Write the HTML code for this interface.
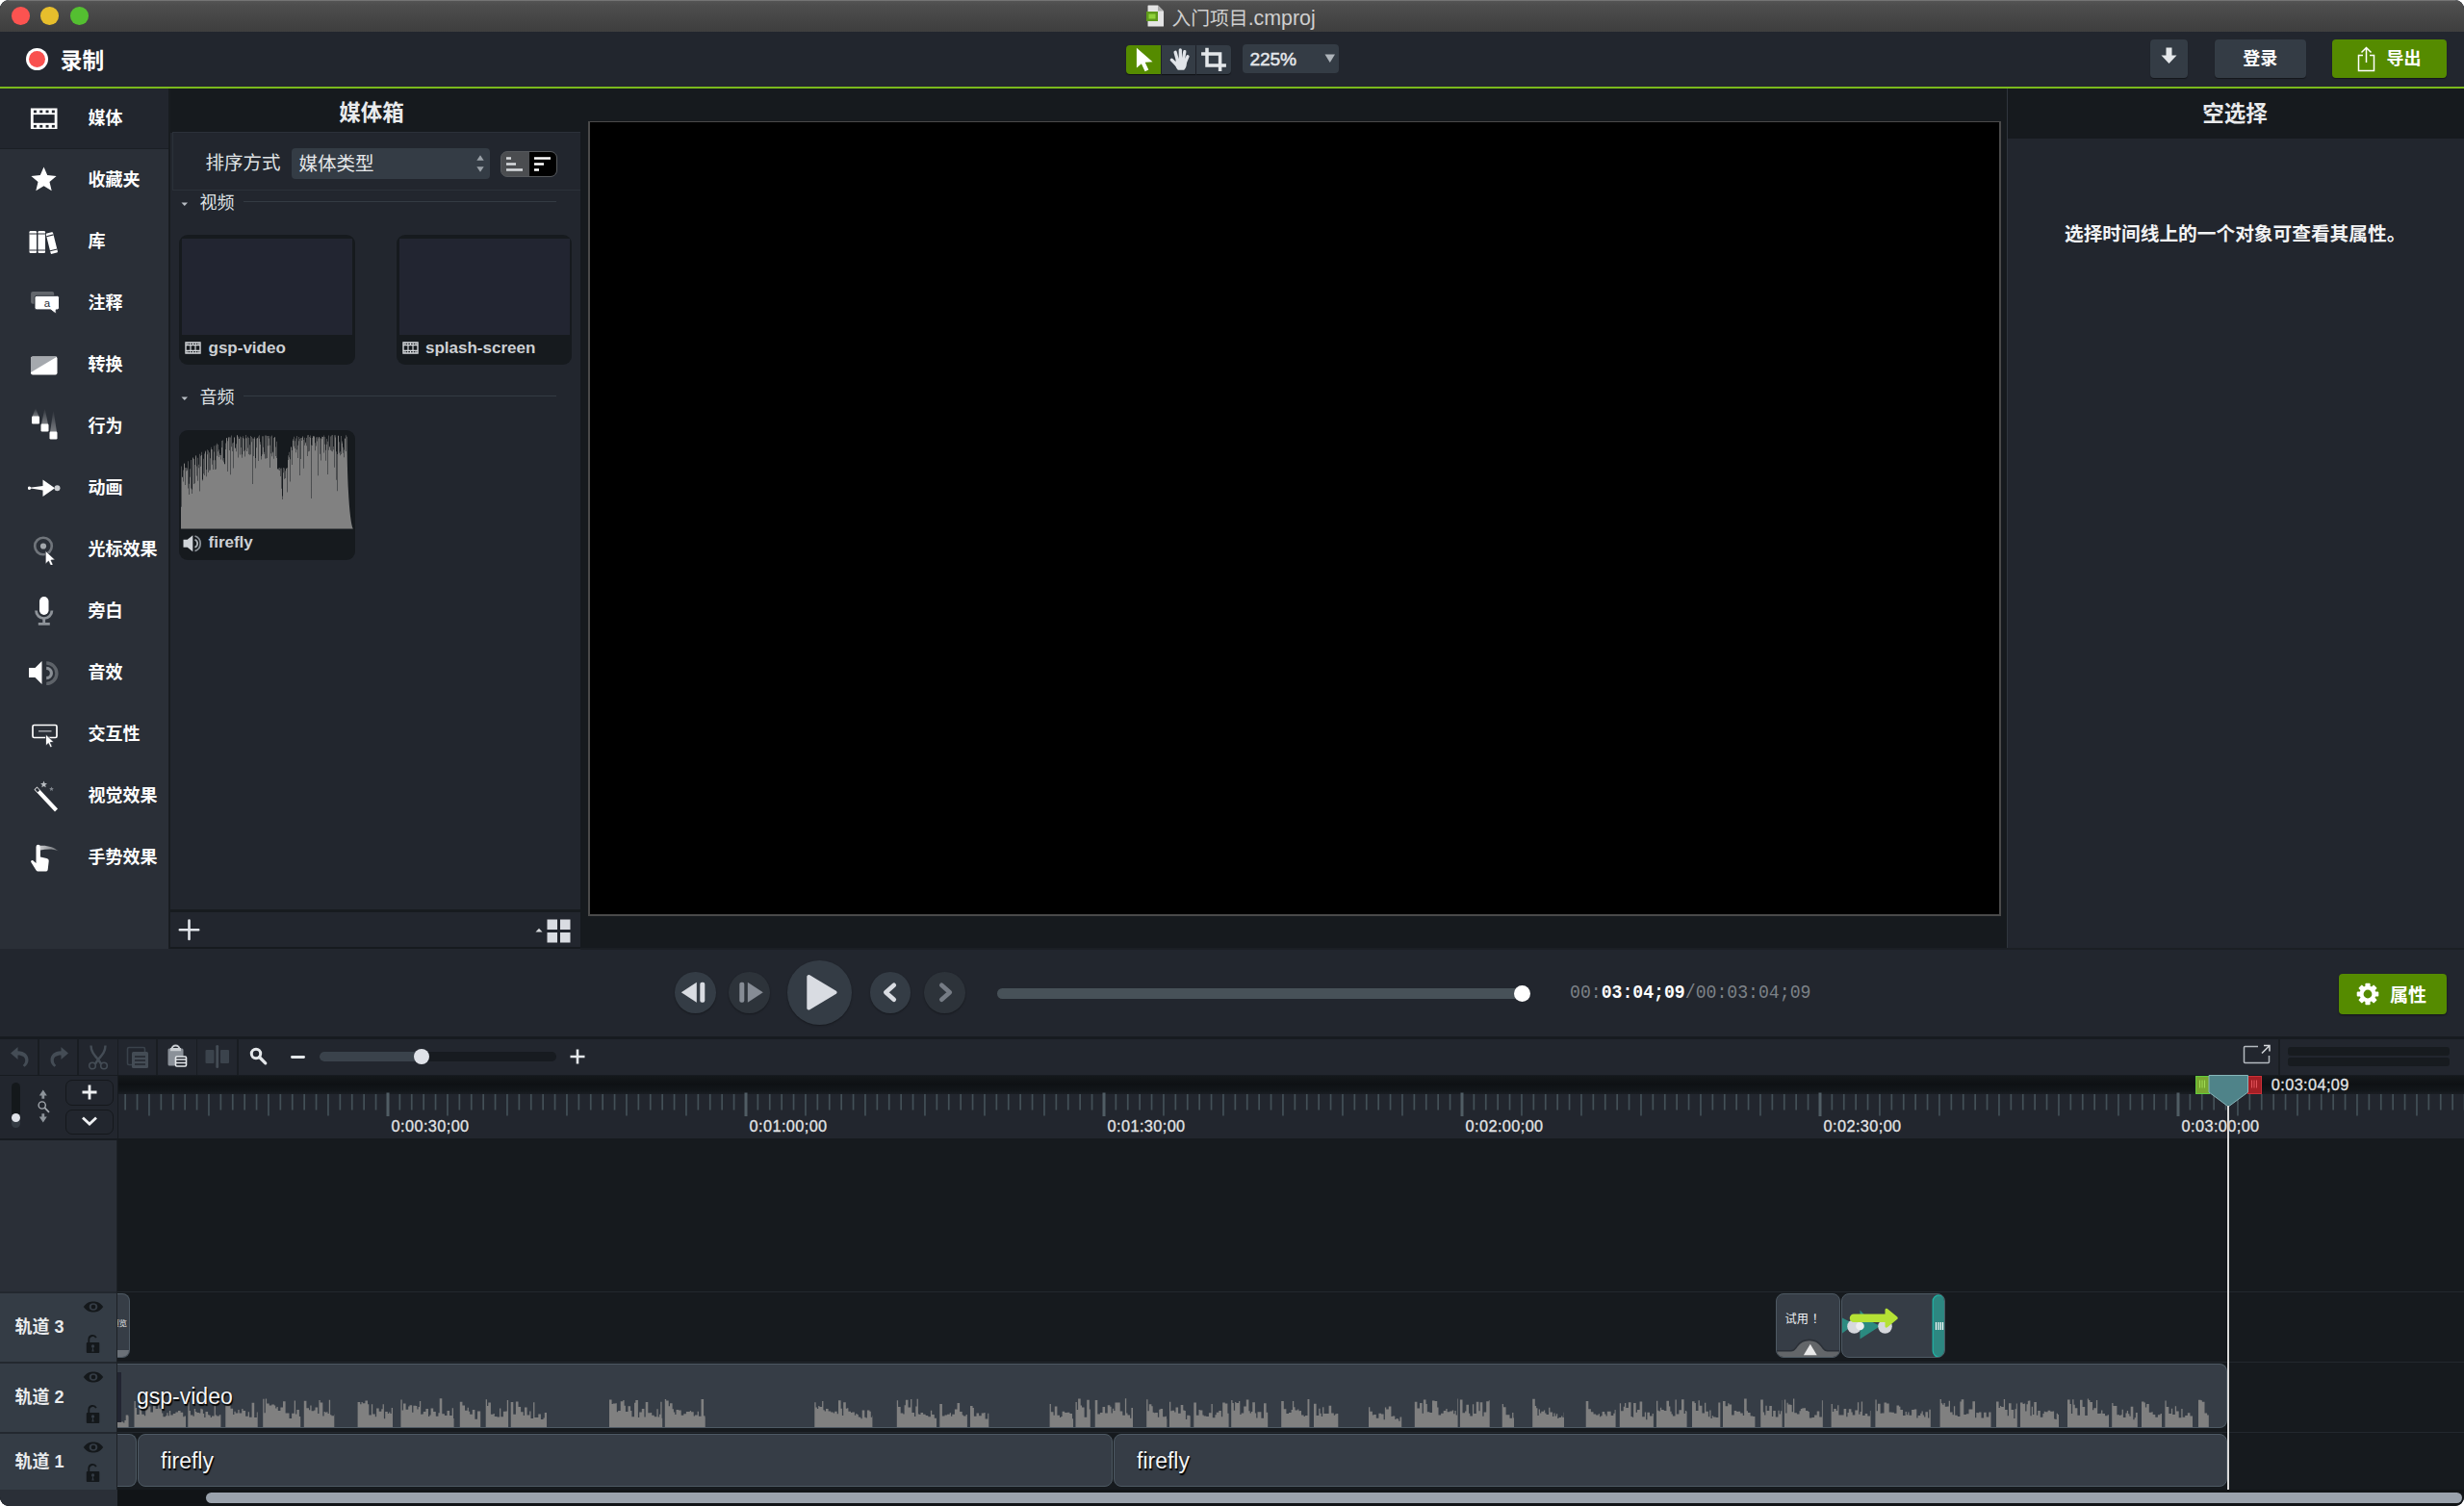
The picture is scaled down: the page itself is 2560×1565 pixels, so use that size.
<!DOCTYPE html><html lang="zh-CN"><head><meta charset="utf-8"><title>入门项目.cmproj</title><style>
html{margin:0;padding:0;background:#fff;}body{margin:0;padding:0;border-radius:9px;}
body{width:2560px;height:1565px;background:#22262e;position:relative;overflow:hidden;
font-family:"Liberation Sans","Noto Sans CJK SC",sans-serif;-webkit-font-smoothing:antialiased;}
div,svg{position:absolute;box-sizing:border-box;}
.mono{font-family:"Liberation Mono",monospace;}
</style></head><body><div id="win" style="left:0;top:0;width:2560px;height:1565px;border-radius:9px;overflow:hidden;background:#22262e;"><div style="left:0px;top:0px;width:2560px;height:33.8px;background:linear-gradient(#545454,#4d4d4d 15%,#3e3e3e);border-bottom:1px solid #15171a;border-top:1px solid #747474;"></div><div style="left:11.950000000000001px;top:7.35px;width:18.7px;height:18.7px;border-radius:50%;background:#fc5350;"></div><div style="left:42.449999999999996px;top:7.35px;width:18.7px;height:18.7px;border-radius:50%;background:#e7be2c;"></div><div style="left:72.95px;top:7.35px;width:18.7px;height:18.7px;border-radius:50%;background:#54bf31;"></div><svg style="left:1191px;top:5px" width="19" height="23" viewBox="0 0 19 23"><path d="M2 0.5h10l6 6v15.5a.5.5 0 0 1-.5.5h-15.5a.5.5 0 0 1-.5-.5v-21a.5.5 0 0 1 .5-.5z" fill="#e4e4e4"/><path d="M12 .5l6 6h-6z" fill="#a9a9a9"/><rect x="0" y="7" width="12" height="10" fill="#5e9a1b"/><rect x="2.5" y="9.5" width="7" height="5" fill="#8fd13a"/></svg><div style="left:1217.5px;top:4.5px;font-size:19.8px;line-height:28px;color:#cfcfcf;font-weight:400;white-space:nowrap;">入门项目<span style="font-size:21.400px">.cmproj</span></div><div style="left:0px;top:33px;width:2560px;height:57px;background:#22262e;"></div><div style="left:0px;top:90.1px;width:2560px;height:1.7px;background:#7ab81c;"></div><div style="left:27px;top:50px;width:23px;height:23px;border-radius:50%;background:#fff;"></div><div style="left:30px;top:53px;width:17px;height:17px;border-radius:50%;background:#f9514f;"></div><div style="left:62.8px;top:46.7px;font-size:22.7px;line-height:32px;color:#fff;font-weight:700;white-space:nowrap;">录制</div><div style="left:1170px;top:46.5px;width:35.5px;height:30.5px;background:#558b00;border-radius:4px 0 0 4px;box-shadow:0 1px 1px rgba(0,0,0,.5);"></div><div style="left:1206.5px;top:46.5px;width:35.5px;height:30.5px;background:#343c45;box-shadow:0 1px 1px rgba(0,0,0,.5);"></div><div style="left:1243px;top:46.5px;width:35.5px;height:30.5px;background:#343c45;border-radius:0 4px 4px 0;box-shadow:0 1px 1px rgba(0,0,0,.5);"></div><svg style="left:1178px;top:49px" width="22" height="26" viewBox="0 0 22 26"><path d="M2.900.700V21.600L7.900 17.300l3.700 8 3.700-1.700-3.600-7.800 7.800-.500z" fill="#fff"/></svg><svg style="left:1214px;top:50px" width="24" height="24" viewBox="0 0 24 24"><g stroke="#e1e4e9" stroke-width="3.300" stroke-linecap="round" fill="none"><path d="M9.600 13.500L7.100 4.300M12.400 12.500L12.300 2M15.200 13L16.800 3.700M17.300 15L20 8.700M9 18L3.300 12.200"/></g><path d="M7.800 12.500h10.700c1 4.500 0 7.800-2.300 10.300H9.800C7 20 6.500 16 7.800 12.500z" fill="#e1e4e9"/></svg><svg style="left:1247px;top:48px" width="28" height="28" viewBox="0 0 28 28"><path d="M7 1.700V19.900H26.900M1.100 8H20.600V26" fill="none" stroke="#e4e7ea" stroke-width="3.500"/></svg><div style="left:1291px;top:45.5px;width:100px;height:30.5px;background:#343c45;border-radius:4px;"></div><div style="left:1298.5px;top:48.0px;font-size:19.2px;line-height:27px;color:#e4e7ea;font-weight:400;white-space:nowrap;-webkit-text-stroke:.5px #e4e7ea;letter-spacing:-.2px;">225%</div><svg style="left:1376px;top:56px" width="12" height="10" viewBox="0 0 12 10"><path d="M0.5 0.5h10.5L5.75 9z" fill="#aeb4ba"/></svg><div style="left:2234px;top:41px;width:39px;height:39.5px;background:#343c45;border-radius:4px;box-shadow:0 1px 1px rgba(0,0,0,.4);"></div><svg style="left:2245px;top:49px" width="17" height="18" viewBox="0 0 17 18"><path d="M5.5 0.5h6v8h5L8.5 17 .5 8.500h5z" fill="#e4e7ea"/></svg><div style="left:2301px;top:41px;width:94.5px;height:39.5px;background:#343c45;border-radius:4px;box-shadow:0 1px 1px rgba(0,0,0,.4);"></div><div style="left:2301px;top:49.2px;font-size:18px;line-height:25px;color:#fff;font-weight:700;white-space:nowrap;width:94.5px;text-align:center;">登录</div><div style="left:2422.5px;top:41px;width:119px;height:39.5px;background:#558b00;border-radius:4px;box-shadow:0 1px 1px rgba(0,0,0,.4);"></div><svg style="left:2448px;top:47px" width="22" height="28" viewBox="0 0 22 28"><path d="M7 10.500H2.500V26.500H18.500V10.500H14" fill="none" stroke="#fff" stroke-width="1.500"/><path d="M10.500 18V3M5.500 7.500L10.500 2.500 15.500 7.500" fill="none" stroke="#fff" stroke-width="1.500"/></svg><div style="left:2479.5px;top:49.2px;font-size:18px;line-height:25px;color:#fff;font-weight:700;white-space:nowrap;">导出</div><div style="left:0px;top:92px;width:175.2px;height:894px;background:#2a2f37;"></div><div style="left:0px;top:92px;width:177px;height:63.2px;background:#22262e;border-bottom:1.500px solid #1b1f25;"></div><div style="left:175.2px;top:92px;width:1.8px;height:894px;background:#181c20;"></div><svg style="left:29px;top:105px" width="34" height="34" viewBox="0 0 34 34"><path d="M2.900 7.600h27.600v21.400H2.900z" fill="#fff"/><rect x="5.700" y="14.100" width="22" height="8.700" fill="#22262e"/><rect x="5.95" y="9.600" width="3" height="2.700" fill="#22262e"/><rect x="5.95" y="24.900" width="3" height="2.700" fill="#22262e"/><rect x="12.25" y="9.600" width="3" height="2.700" fill="#22262e"/><rect x="12.25" y="24.900" width="3" height="2.700" fill="#22262e"/><rect x="18.55" y="9.600" width="3" height="2.700" fill="#22262e"/><rect x="18.55" y="24.900" width="3" height="2.700" fill="#22262e"/><rect x="24.85" y="9.600" width="3" height="2.700" fill="#22262e"/><rect x="24.85" y="24.900" width="3" height="2.700" fill="#22262e"/></svg><div style="left:91.5px;top:110.7px;font-size:18px;line-height:25px;color:#fff;font-weight:700;white-space:nowrap;">媒体</div><svg style="left:29px;top:170.3px" width="34" height="34" viewBox="0 0 34 34"><path d="M16.500 3.500l3.700 8.600 9.400.8-7.100 6.100 2.200 9.200-8.200-4.900-8.200 4.900 2.200-9.200-7.100-6.100 9.400-.8z" fill="#fff"/></svg><div style="left:91.5px;top:174.7px;font-size:18px;line-height:25px;color:#fff;font-weight:700;white-space:nowrap;">收藏夹</div><svg style="left:29px;top:232.4px" width="34" height="34" viewBox="0 0 34 34"><rect x="1.500" y="8" width="7.500" height="23" rx="1.200" fill="#fff"/><rect x="10.500" y="8" width="7.500" height="23" rx="1.200" fill="#fff"/><g transform="rotate(-14 25 20)"><rect x="21" y="9.500" width="7.500" height="22" rx="1.200" fill="#fff"/><path d="M21 12.500h7.500M21 28h7.500" stroke="#2a2f37" stroke-width="1.100"/></g><path d="M1.500 11h16.500M1.500 28h16.500" stroke="#2a2f37" stroke-width="1.100"/></svg><div style="left:91.5px;top:238.7px;font-size:18px;line-height:25px;color:#fff;font-weight:700;white-space:nowrap;">库</div><svg style="left:29px;top:297px" width="34" height="34" viewBox="0 0 34 34"><rect x="3.100" y="6.100" width="24.100" height="12.600" rx="2" fill="#63676c"/><path d="M9 10.300h21.500a2 2 0 0 1 2 2v10.600a2 2 0 0 1-2 2h-1.300v4.300l-5.700-4.300H9a2 2 0 0 1-2-2V12.300a2 2 0 0 1 2-2z" fill="#fff" stroke="#2a2f37" stroke-width="1"/><text x="19.900" y="21.600" font-size="11.500" font-weight="400" text-anchor="middle" fill="#2a2f37" style="font-family:Liberation Sans,sans-serif">a</text></svg><div style="left:91.5px;top:302.7px;font-size:18px;line-height:25px;color:#fff;font-weight:700;white-space:nowrap;">注释</div><svg style="left:29px;top:362.6px" width="34" height="34" viewBox="0 0 34 34"><rect x="3" y="7.500" width="27.500" height="19" rx="2" fill="#fff"/><path d="M3 9.500a2 2 0 0 1 2-2h25.500L3 24z" fill="#a5a9ae"/></svg><div style="left:91.5px;top:366.7px;font-size:18px;line-height:25px;color:#fff;font-weight:700;white-space:nowrap;">转换</div><svg style="left:29px;top:423.7px" width="34" height="34" viewBox="0 0 34 34"><defs><linearGradient id="bg1" x1="0" y1="0" x2="0" y2="1"><stop offset="0" stop-color="#fff" stop-opacity="0"/><stop offset="1" stop-color="#fff" stop-opacity=".38"/></linearGradient></defs><path d="M8 0l3.500 9h-7z" fill="url(#bg1)"/><path d="M17.500 0l3.500 17h-7z" fill="url(#bg1)"/><path d="M26.500 2l3.500 23h-7z" fill="url(#bg1)"/><rect x="4" y="8.500" width="8" height="8" rx="1.200" fill="#fff"/><rect x="13.500" y="16.500" width="8" height="8" rx="1.200" fill="#fff"/><rect x="22.500" y="24.500" width="8" height="8" rx="1.200" fill="#fff"/></svg><div style="left:91.5px;top:430.7px;font-size:18px;line-height:25px;color:#fff;font-weight:700;white-space:nowrap;">行为</div><svg style="left:29px;top:490.3px" width="34" height="34" viewBox="0 0 34 34"><path d="M0 17l15.500-2V8.500L28 17.300 15.500 26v-6.500z" fill="#fff"/><circle cx="1.500" cy="17.200" r="1.700" fill="#fff"/><circle cx="30.500" cy="17.200" r="3" fill="#c9ccd0"/></svg><div style="left:91.5px;top:494.7px;font-size:18px;line-height:25px;color:#fff;font-weight:700;white-space:nowrap;">动画</div><svg style="left:29px;top:553px" width="34" height="34" viewBox="0 0 34 34"><circle cx="16" cy="14.500" r="8.800" fill="none" stroke="#70757b" stroke-width="2.600"/><circle cx="16" cy="14.500" r="3.100" fill="#a3a7ac"/><path d="M18.300 19.500l0 13.500 3.200-2.900 2.200 4.800 2.400-1.100-2.200-4.700 4.300-.300z" fill="#fff" stroke="#2a2f37" stroke-width=".6"/></svg><div style="left:91.5px;top:558.7px;font-size:18px;line-height:25px;color:#fff;font-weight:700;white-space:nowrap;">光标效果</div><svg style="left:29px;top:617px" width="34" height="34" viewBox="0 0 34 34"><rect x="12" y="3" width="9.500" height="19" rx="4.750" fill="#fff"/><path d="M8.500 17.500a8.200 8.200 0 0 0 16.400 0" fill="none" stroke="#8e9399" stroke-width="2.800"/><path d="M16.700 26v5M10.800 31.300h12" stroke="#8e9399" stroke-width="2.800"/></svg><div style="left:91.5px;top:622.7px;font-size:18px;line-height:25px;color:#fff;font-weight:700;white-space:nowrap;">旁白</div><svg style="left:29px;top:682px" width="34" height="34" viewBox="0 0 34 34"><path d="M1 12h6.500L14.500 5v24l-7-7H1z" fill="#fff"/><path d="M19.200 12.300a5.200 5.200 0 0 1 0 10.400" fill="none" stroke="#8b9096" stroke-width="3.200"/><path d="M19.200 7a10.700 10.700 0 0 1 0 21.400" fill="none" stroke="#5e6369" stroke-width="3.400"/></svg><div style="left:91.5px;top:686.7px;font-size:18px;line-height:25px;color:#fff;font-weight:700;white-space:nowrap;">音效</div><svg style="left:29px;top:748px" width="34" height="34" viewBox="0 0 34 34"><rect x="5" y="5.500" width="25" height="13" rx="1.500" fill="none" stroke="#fff" stroke-width="1.700"/><path d="M11 11.800h13.500" stroke="#a9adb2" stroke-width="1.400"/><path d="M18.500 15l0 12 2.800-2.500 2 4.300 2-1-2-4.200 3.700-.300z" fill="#fff" stroke="#2a2f37" stroke-width=".8"/></svg><div style="left:91.5px;top:750.7px;font-size:18px;line-height:25px;color:#fff;font-weight:700;white-space:nowrap;">交互性</div><svg style="left:29px;top:809.5px" width="34" height="34" viewBox="0 0 34 34"><path d="M6.500 10.500l3-3L31 30.500l-3 3z" fill="#fff"/><path d="M7.500 10.500l2-2 2.600 2.800-2 2z" fill="#2a2f37"/><path d="M16.500 1.500l1 2.400 2.500.2-1.900 1.700.6 2.500-2.200-1.300-2.200 1.300.6-2.500-1.900-1.700 2.500-.2z" fill="#b7bbc0"/><path d="M24.500 7.500l.7 1.600 1.700.1-1.300 1.100.4 1.700-1.500-.9-1.500.9.400-1.700-1.300-1.100 1.700-.1z" fill="#7f858c"/></svg><div style="left:91.5px;top:814.7px;font-size:18px;line-height:25px;color:#fff;font-weight:700;white-space:nowrap;">视觉效果</div><svg style="left:29px;top:873.5px" width="34" height="34" viewBox="0 0 34 34"><defs><linearGradient id="gg1" x1="0" y1="0" x2="1" y2="0"><stop offset="0" stop-color="#fff" stop-opacity=".75"/><stop offset="1" stop-color="#fff" stop-opacity=".3"/></linearGradient></defs><path d="M12.500 4.800C20 4 27 6.500 31.700 10.200 26 8 19 8.300 12.900 9.600z" fill="url(#gg1)"/><path d="M8.500 6a2.200 2.200 0 0 1 4.400 0v10.500l6.600 1.400c1.600.4 2.400 1.400 2.200 3l-1 8.600c-.2 1.400-1 2-2.300 2H11c-1.200 0-2-.5-2.700-1.500L3.300 22c-.8-1.300.7-2.800 2-1.700l3.200 2.700z" fill="#fff"/></svg><div style="left:91.5px;top:878.7px;font-size:18px;line-height:25px;color:#fff;font-weight:700;white-space:nowrap;">手势效果</div><div style="left:177px;top:92px;width:426px;height:45.5px;background:#161a1e;"></div><div style="left:176px;top:102.2px;font-size:22.5px;line-height:31px;color:#e9ebed;font-weight:700;white-space:nowrap;width:420px;text-align:center;">媒体箱</div><div style="left:179px;top:137px;width:424px;height:60.5px;background:#22262e;border:1px solid #2b3139;border-right:none;"></div><div style="left:213.5px;top:156.2px;font-size:19.5px;line-height:27px;color:#dfe2e5;font-weight:400;white-space:nowrap;">排序方式</div><div style="left:303px;top:154px;width:206px;height:32px;background:#343c45;border-radius:4px;"></div><div style="left:310.5px;top:157.2px;font-size:19.5px;line-height:27px;color:#e6e8ea;font-weight:400;white-space:nowrap;">媒体类型</div><svg style="left:494px;top:160px" width="10" height="20" viewBox="0 0 10 20"><path d="M1.300 6.800L5 1.200l3.700 5.600zM1.300 13.200L5 18.800l3.700-5.600z" fill="#9aa1a8"/></svg><div style="left:519.5px;top:157px;width:59px;height:27px;background:#4b4d50;border-radius:7px;border:1px solid #55585c;overflow:hidden;"><div style="left:29.5px;top:-1px;width:30px;height:27px;background:#000;"></div></div><svg style="left:525px;top:162px" width="20" height="17" viewBox="0 0 20 17"><path d="M1 2.500h5M1 8.500h10M1 14.500h17" stroke="#d9dbde" stroke-width="2.600"/></svg><svg style="left:554px;top:162px" width="20" height="17" viewBox="0 0 20 17"><path d="M1 2.500h17M1 8.500h10M1 14.500h5" stroke="#fff" stroke-width="2.600"/></svg><svg style="left:188px;top:210px" width="8" height="5" viewBox="0 0 8 5"><path d="M.5.5h6.500L3.750 4z" fill="#b9bec4"/></svg><div style="left:207.5px;top:198.7px;font-size:18px;line-height:25px;color:#dfe2e5;font-weight:400;white-space:nowrap;">视频</div><div style="left:253px;top:209.2px;width:325px;height:1.2px;background:#343b43;"></div><svg style="left:188px;top:412px" width="8" height="5" viewBox="0 0 8 5"><path d="M.5.5h6.500L3.750 4z" fill="#b9bec4"/></svg><div style="left:207.5px;top:400.7px;font-size:18px;line-height:25px;color:#dfe2e5;font-weight:400;white-space:nowrap;">音频</div><div style="left:253px;top:411.2px;width:325px;height:1.2px;background:#343b43;"></div><div style="left:186px;top:244px;width:182.5px;height:135px;background:#161a1e;border-radius:9px;"></div><div style="left:189px;top:248px;width:177px;height:99.5px;background:#222531;"></div><svg style="left:192px;top:354.5px" width="20" height="14" viewBox="0 0 20 14"><path d="M1 1h15v11H1z" fill="none" stroke="#d5d8db" stroke-width="1.400"/><path d="M1 3.600h15M1 9.400h15M6 3.600v5.800M11 3.600v5.800" stroke="#d5d8db" stroke-width="1.200"/><path d="M3 1v2.600M5.800 1v2.600M8.500 1v2.600M11.200 1v2.600M14 1v2.600M3 9.400V12M5.800 9.400V12M8.500 9.400V12M11.200 9.400V12M14 9.400V12" stroke="#d5d8db" stroke-width="1"/></svg><div style="left:216.5px;top:349.5px;font-size:17px;line-height:24px;color:#cdd0d4;font-weight:700;white-space:nowrap;">gsp-video</div><div style="left:411.5px;top:244px;width:182.5px;height:135px;background:#161a1e;border-radius:9px;"></div><div style="left:414.5px;top:248px;width:177px;height:99.5px;background:#222531;"></div><svg style="left:417.5px;top:354.5px" width="20" height="14" viewBox="0 0 20 14"><path d="M1 1h15v11H1z" fill="none" stroke="#d5d8db" stroke-width="1.400"/><path d="M1 3.600h15M1 9.400h15M6 3.600v5.800M11 3.600v5.800" stroke="#d5d8db" stroke-width="1.200"/><path d="M3 1v2.600M5.800 1v2.600M8.500 1v2.600M11.200 1v2.600M14 1v2.600M3 9.400V12M5.800 9.400V12M8.500 9.400V12M11.200 9.400V12M14 9.400V12" stroke="#d5d8db" stroke-width="1"/></svg><div style="left:442.0px;top:349.5px;font-size:17px;line-height:24px;color:#cdd0d4;font-weight:700;white-space:nowrap;">splash-screen</div><div style="left:186px;top:446.5px;width:182.5px;height:135px;background:#161a1e;border-radius:9px;"></div><svg style="left:0;top:0" width="620" height="600" viewBox="0 0 620 600"><path d="M188 549.5V484.6H188.5V526.7H189.0V495.6H189.5V495.9H190.0V488.6H190.5V500.5H191.0V481.9H191.5V481.2H192.0V485.9H192.5V504.0H193.0V486.1H193.5V489.5H194.0V488.7H194.5V486.5H195.0V507.5H195.5V479.3H196.0V513.9H196.5V502.7H197.0V487.3H197.5V495.8H198.0V507.6H198.5V477.9H199.0V508.5H199.5V512.9H200.0V475.3H200.5V476.3H201.0V477.1H201.5V503.0H202.0V483.0H202.5V502.3H203.0V474.3H203.5V473.0H204.0V484.6H204.5V494.6H205.0V475.8H205.5V499.8H206.0V486.3H206.5V482.7H207.0V510.4H207.5V471.7H208.0V473.8H208.5V484.8H209.0V473.1H209.5V469.7H210.0V498.3H210.5V499.4H211.0V476.8H211.5V492.3H212.0V471.4H212.5V494.0H213.0V469.6H213.5V468.4H214.0V488.1H214.5V495.2H215.0V467.3H215.5V472.3H216.0V491.1H216.5V468.2H217.0V488.7H217.5V470.3H218.0V488.5H218.5V476.3H219.0V464.7H219.5V467.1H220.0V482.8H220.5V467.1H221.0V478.3H221.5V488.1H222.0V463.3H222.5V469.6H223.0V488.1H223.5V478.3H224.0V487.6H224.5V462.6H225.0V460.7H225.5V473.8H226.0V469.3H226.5V462.0H227.0V467.3H227.5V475.0H228.0V471.3H228.5V472.9H229.0V473.1H229.5V477.4H230.0V464.9H230.5V457.9H231.0V457.4H231.5V478.4H232.0V476.1H232.5V480.3H233.0V481.9H233.5V482.5H234.0V467.0H234.5V460.4H235.0V455.3H235.5V455.0H236.0V458.2H236.5V489.9H237.0V455.3H237.5V454.0H238.0V468.1H238.5V454.3H239.0V454.4H239.5V493.2H240.0V464.3H240.5V452.5H241.0V469.1H241.5V460.4H242.0V459.8H242.5V486.5H243.0V453.9H243.5V454.9H244.0V465.4H244.5V465.7H245.0V461.3H245.5V469.2H246.0V452.3H246.5V452.3H247.0V475.5H247.5V453.8H248.0V455.8H248.5V455.9H249.0V453.5H249.5V472.5H250.0V465.1H250.5V454.3H251.0V472.3H251.5V475.7H252.0V454.9H252.5V453.2H253.0V468.9H253.5V455.8H254.0V474.5H254.5V467.8H255.0V452.1H255.5V455.3H256.0V468.9H256.5V455.2H257.0V465.6H257.5V453.8H258.0V454.9H258.5V472.0H259.0V462.3H259.5V472.7H260.0V453.0H260.5V472.2H261.0V459.3H261.5V454.1H262.0V455.6H262.5V503.1H263.0V474.1H263.5V455.8H264.0V454.1H264.5V455.6H265.0V475.9H265.5V486.4H266.0V465.3H266.5V455.8H267.0V455.0H267.5V455.2H268.0V453.5H268.5V479.0H269.0V452.2H269.5V455.7H270.0V459.2H270.5V462.1H271.0V473.9H271.5V477.4H272.0V453.3H272.5V472.3H273.0V453.3H273.5V464.7H274.0V472.0H274.5V469.7H275.0V452.6H275.5V476.5H276.0V476.5H276.5V452.4H277.0V453.0H277.5V476.0H278.0V463.2H278.5V453.1H279.0V455.4H279.5V453.1H280.0V462.8H280.5V485.9H281.0V471.2H281.5V453.6H282.0V474.3H282.5V452.6H283.0V470.4H283.5V469.5H284.0V455.1H284.5V476.8H285.0V454.5H285.5V454.1H286.0V474.1H286.5V464.4H287.0V475.9H287.5V458.7H288.0V487.0H288.5V487.7H289.0V486.4H289.5V488.2H290.0V488.9H290.5V485.9H291.0V495.0H291.5V486.7H292.0V486.6H292.5V507.8H293.0V515.5H293.5V518.9H294.0V491.3H294.5V486.1H295.0V497.7H295.5V486.4H296.0V489.2H296.5V497.1H297.0V486.9H297.5V486.5H298.0V486.0H298.5V511.6H299.0V477.9H299.5V473.2H300.0V475.3H300.5V469.7H301.0V500.6H301.5V477.3H302.0V464.4H302.5V464.6H303.0V483.0H303.5V467.9H304.0V458.1H304.5V456.2H305.0V463.8H305.5V453.7H306.0V466.0H306.5V458.3H307.0V470.2H307.5V455.4H308.0V467.3H308.5V453.0H309.0V475.9H309.5V462.7H310.0V458.2H310.5V453.9H311.0V494.1H311.5V455.9H312.0V477.1H312.5V455.1H313.0V454.9H313.5V457.9H314.0V454.4H314.5V453.3H315.0V457.0H315.5V486.7H316.0V462.7H316.5V454.8H317.0V459.6H317.5V460.4H318.0V463.2H318.5V454.9H319.0V452.2H319.5V474.1H320.0V452.1H320.5V469.3H321.0V468.8H321.5V454.1H322.0V454.9H322.5V452.5H323.0V518.0H323.5V462.5H324.0V455.1H324.5V462.9H325.0V453.6H325.5V453.0H326.0V454.2H326.5V453.0H327.0V468.2H327.5V460.3H328.0V463.5H328.5V454.5H329.0V458.4H329.5V453.9H330.0V455.5H330.5V494.3H331.0V454.2H331.5V454.0H332.0V455.4H332.5V471.8H333.0V478.5H333.5V455.2H334.0V453.8H334.5V456.3H335.0V454.0H335.5V454.0H336.0V452.6H336.5V470.4H337.0V454.1H337.5V461.7H338.0V467.7H338.5V478.8H339.0V456.0H339.5V461.7H340.0V493.0H340.5V458.8H341.0V467.8H341.5V452.6H342.0V463.7H342.5V464.7H343.0V453.4H343.5V467.8H344.0V468.8H344.5V452.6H345.0V469.2H345.5V452.0H346.0V467.2H346.5V464.0H347.0V485.7H347.5V452.2H348.0V452.3H348.5V454.4H349.0V469.3H349.5V498.8H350.0V510.2H350.5V472.1H351.0V452.4H351.5V453.0H352.0V470.8H352.5V459.2H353.0V473.3H353.5V469.3H354.0V453.0H354.5V472.1H355.0V460.8H355.5V458.5H356.0V470.7H356.5V464.7H357.0V475.2H357.5V467.4H358.0V455.6H358.5V455.7H359.0V452.2H359.5V469.1H360.0V453.8H360.5V452 C360.8 514 363.8 543.5 366.8 549.5Z" fill="#818181"/></svg><svg style="left:190px;top:555.8px" width="22" height="18" viewBox="0 0 22 18"><path d="M.500 4.800h4.200L10.300.300v16.900l-5.600-4.500H.500z" fill="#d0d4d9"/><path d="M12.500 4.700a4.500 4.500 0 0 1 0 8.200" fill="none" stroke="#aab0b6" stroke-width="1.800"/><path d="M12.500 1a8.200 8.200 0 0 1 0 15.600" fill="none" stroke="#8a9097" stroke-width="1.800"/></svg><div style="left:216.5px;top:552.0px;font-size:17px;line-height:24px;color:#cdd0d4;font-weight:700;white-space:nowrap;">firefly</div><div style="left:177px;top:945px;width:426px;height:2.5px;background:#171b1f;"></div><div style="left:177px;top:983.5px;width:426px;height:2.5px;background:#171b1f;"></div><svg style="left:185px;top:953.800px" width="24" height="24" viewBox="0 0 24 24"><path d="M11.500 2.500v19.500M1.800 12.200h19.400" stroke="#e2e5ea" stroke-width="2.600" stroke-linecap="round"/></svg><svg style="left:556px;top:954px" width="38" height="28" viewBox="0 0 38 28"><path d="M.500 14.500h7L4 10.800z" fill="#d5d8db"/><rect x="12.500" y="1.500" width="10.500" height="10.500" fill="#d9dce2"/><rect x="26" y="1.500" width="10.500" height="10.500" fill="#d9dce2"/><rect x="12.500" y="15" width="10.500" height="10.500" fill="#d9dce2"/><rect x="26" y="15" width="10.500" height="10.500" fill="#d9dce2"/></svg><div style="left:603px;top:92px;width:1481.5px;height:894px;background:#161a1e;"></div><div style="left:611px;top:125.8px;width:1467.8px;height:826.1px;background:#4a4a4a;"></div><div style="left:612.7px;top:127.4px;width:1464.3px;height:822.6px;background:#000;"></div><div style="left:2084.5px;top:92px;width:1.5px;height:894px;background:#30363e;"></div><div style="left:2086px;top:92px;width:474px;height:51.5px;background:#161a1e;"></div><div style="left:2086px;top:143.5px;width:474px;height:842.5px;background:#22262e;"></div><div style="left:2086px;top:102.7px;font-size:22.5px;line-height:31px;color:#e9ebed;font-weight:700;white-space:nowrap;width:472px;text-align:center;">空选择</div><div style="left:2145px;top:228.7px;font-size:19.7px;line-height:28px;color:#f2f3f4;font-weight:700;white-space:nowrap;">选择时间线上的一个对象可查看其属性。</div><div style="left:0px;top:986px;width:2560px;height:91.5px;background:#22262e;"></div><div style="left:603px;top:985px;width:1957px;height:1.5px;background:#1b1f24;"></div><div style="left:701.0px;top:1010.2px;width:42.6px;height:42.6px;border-radius:50%;background:#343c45;box-shadow:0 1px 2px rgba(0,0,0,.35);"></div><svg style="left:701.0px;top:1010.2px" width="42.6" height="42.6" viewBox="-21.3 -21.3 42.6 42.6"><path d="M-14.500 0L1.500-10.500v21z" fill="#d9dce2"/><rect x="5" y="-10.500" width="5" height="21" rx="2" fill="#d9dce2"/></svg><div style="left:757.3000000000001px;top:1010.2px;width:42.6px;height:42.6px;border-radius:50%;background:#2d333a;box-shadow:0 1px 2px rgba(0,0,0,.35);"></div><svg style="left:757.3000000000001px;top:1010.2px" width="42.6" height="42.6" viewBox="-21.3 -21.3 42.6 42.6"><path d="M14.500 0L-1.500-10.500v21z" fill="#868c95"/><rect x="-10" y="-10.500" width="5" height="21" rx="2" fill="#868c95"/></svg><div style="left:818.3000000000001px;top:998.2px;width:66.6px;height:66.6px;border-radius:50%;background:#343c45;box-shadow:0 1px 2px rgba(0,0,0,.35);"></div><svg style="left:818.3000000000001px;top:998.2px" width="66.6" height="66.6" viewBox="-33.3 -33.3 66.6 66.6"><path d="M-13-16.500a2 2 0 0 1 3-1.500L17.500-1.500a1.800 1.800 0 0 1 0 3L-10 18a2 2 0 0 1-3-1.500z" fill="#d9dce2"/></svg><div style="left:903.7px;top:1010.2px;width:42.6px;height:42.6px;border-radius:50%;background:#343c45;box-shadow:0 1px 2px rgba(0,0,0,.35);"></div><svg style="left:903.7px;top:1010.2px" width="42.6" height="42.6" viewBox="-21.3 -21.3 42.6 42.6"><path d="M3.500-7.500L-5 0l8.500 7.500" fill="none" stroke="#d9dce2" stroke-width="4.600" stroke-linecap="round" stroke-linejoin="round"/></svg><div style="left:960.0px;top:1010.2px;width:42.6px;height:42.6px;border-radius:50%;background:#2d333a;box-shadow:0 1px 2px rgba(0,0,0,.35);"></div><svg style="left:960.0px;top:1010.2px" width="42.6" height="42.6" viewBox="-21.3 -21.3 42.6 42.6"><path d="M-3-7.500L5.500 0l-8.500 7.500" fill="none" stroke="#767c85" stroke-width="4.600" stroke-linecap="round" stroke-linejoin="round"/></svg><div style="left:1036px;top:1027.4px;width:550px;height:10.6px;background:#475158;border-radius:5.300px;"></div><div style="left:1572.5px;top:1024.2px;width:17px;height:17px;background:#fff;border-radius:50%;"></div><div class="mono" style="left:1631px;top:1018.1px;font-size:18.150px;line-height:26px;white-space:nowrap;transform:scaleY(1.1);transform-origin:50% 50%;"><span style="color:#7c8187">00:</span><span style="color:#fff;font-weight:700">03:04;09</span><span style="color:#7c8187">/00:03:04;09</span></div><div style="left:2430px;top:1012px;width:111.5px;height:42px;background:#558b00;border-radius:4px;box-shadow:0 1px 2px rgba(0,0,0,.5);"></div><svg style="left:2448px;top:1021px" width="24" height="24" viewBox="-12 -12 24 24"><g fill="#fff"><rect x="-2.600" y="-11.300" width="5.200" height="6" rx="1" transform="rotate(0)"/><rect x="-2.600" y="-11.300" width="5.200" height="6" rx="1" transform="rotate(45)"/><rect x="-2.600" y="-11.300" width="5.200" height="6" rx="1" transform="rotate(90)"/><rect x="-2.600" y="-11.300" width="5.200" height="6" rx="1" transform="rotate(135)"/><rect x="-2.600" y="-11.300" width="5.200" height="6" rx="1" transform="rotate(180)"/><rect x="-2.600" y="-11.300" width="5.200" height="6" rx="1" transform="rotate(225)"/><rect x="-2.600" y="-11.300" width="5.200" height="6" rx="1" transform="rotate(270)"/><rect x="-2.600" y="-11.300" width="5.200" height="6" rx="1" transform="rotate(315)"/></g><circle r="6.400" fill="none" stroke="#fff" stroke-width="4"/></svg><div style="left:2483px;top:1020.7px;font-size:19px;line-height:27px;color:#fff;font-weight:700;white-space:nowrap;">属性</div><div style="left:0px;top:1077px;width:2560px;height:2.5px;background:#171b20;"></div><div style="left:0px;top:1079.5px;width:2560px;height:37px;background:#22262e;"></div><div style="left:0px;top:1116.5px;width:2560px;height:1.5px;background:#171b20;"></div><div style="left:39.25px;top:1079.5px;width:1.5px;height:37px;background:#191d22;"></div><div style="left:80.25px;top:1079.5px;width:1.5px;height:37px;background:#191d22;"></div><div style="left:121.55px;top:1079.5px;width:1.5px;height:37px;background:#191d22;"></div><div style="left:162.25px;top:1079.5px;width:1.5px;height:37px;background:#191d22;"></div><div style="left:203.75px;top:1079.5px;width:1.5px;height:37px;background:#191d22;"></div><div style="left:246.25px;top:1079.5px;width:1.5px;height:37px;background:#191d22;"></div><svg style="left:8px;top:1086.200px" width="26" height="26" viewBox="0 0 26 26"><path d="M3 8.500L10.500 2v4.200c7.500 0 11 4.500 11 9.300 0 3-1.500 5.500-4 7.300l-1.800-1.800c1.500-1.500 2.500-3 2.500-5.300 0-3-2.500-5.300-7.700-5.300v4.600z" fill="#444c55"/></svg><svg style="left:48px;top:1086.200px" width="26" height="26" viewBox="0 0 26 26"><g transform="translate(26 0) scale(-1 1)"><path d="M3 8.500L10.500 2v4.200c7.500 0 11 4.500 11 9.300 0 3-1.500 5.500-4 7.300l-1.800-1.800c1.500-1.500 2.500-3 2.500-5.300 0-3-2.500-5.300-7.700-5.300v4.600z" fill="#444c55"/></g></svg><svg style="left:89px;top:1085.200px" width="26" height="28" viewBox="0 0 26 28"><path d="M5.500 1.500c0 6 3 9.500 7.500 14.500L10 20.500M20.500 1.500c0 6-3 9.500-7.500 14.500l3 4.500" fill="none" stroke="#444c55" stroke-width="2.400"/><circle cx="7" cy="22.500" r="3.300" fill="none" stroke="#444c55" stroke-width="1.600"/><circle cx="19" cy="22.500" r="3.300" fill="none" stroke="#444c55" stroke-width="1.600"/></svg><svg style="left:131px;top:1087.200px" width="24" height="24" viewBox="0 0 24 24"><rect x="1.500" y="1.500" width="18" height="18" rx="1.500" fill="none" stroke="#3a424b" stroke-width="1.600"/><rect x="6" y="6" width="17" height="17" rx="1.500" fill="#444c55"/><path d="M9 11h11M9 15h11M9 19h11" stroke="#22262e" stroke-width="1.500"/></svg><svg style="left:173px;top:1084.200px" width="24" height="28" viewBox="0 0 24 28"><path d="M2 6h15v17H2z" fill="#8b9199"/><rect x="1.500" y="5.500" width="16" height="18" rx="1.500" fill="#8b9199"/><path d="M5.500 6.500a4 4 0 0 1 8 0" fill="none" stroke="#c9cdd2" stroke-width="2"/><rect x="4" y="5" width="11" height="3.200" fill="#c9cdd2"/><rect x="9.500" y="14" width="11" height="10" rx="1.200" fill="#22262e" stroke="#e4e7ea" stroke-width="1.600"/><path d="M10 17h10M10 20.500h10" stroke="#e4e7ea" stroke-width="1.400"/></svg><svg style="left:212px;top:1085.200px" width="28" height="28" viewBox="0 0 28 28"><rect x="1.500" y="6" width="9" height="14" rx="1" fill="#3b434c"/><rect x="17" y="6" width="9" height="14" rx="1" fill="#3b434c"/><rect x="12.300" y="1" width="2.800" height="24" rx="1.300" fill="#444c55"/></svg><svg style="left:259px;top:1088px" width="20" height="20" viewBox="0 0 20 20"><circle cx="7" cy="7" r="4.700" fill="none" stroke="#e4e7ea" stroke-width="3"/><path d="M10.500 10.500l6.300 6.300" stroke="#e4e7ea" stroke-width="3.200" stroke-linecap="round"/></svg><div style="left:301.5px;top:1097px;width:15.5px;height:2.8px;background:#e4e7ea;border-radius:1.400px;"></div><div style="left:332px;top:1093.3px;width:246px;height:9.5px;background:#171b20;border-radius:4.750px;"></div><div style="left:332px;top:1093.3px;width:110px;height:9.5px;background:#3a424b;border-radius:4.750px;"></div><div style="left:429.6px;top:1090px;width:16px;height:16px;background:#dfe2e8;border-radius:50%;"></div><svg style="left:592px;top:1090px" width="16" height="16" viewBox="0 0 16 16"><path d="M8 .500v15M.500 8h15" stroke="#e4e7ea" stroke-width="2.600"/></svg><svg style="left:2330px;top:1085px" width="30" height="22" viewBox="0 0 30 22"><path d="M16 2.500H2.500a1 1 0 0 0-1 1v15a1 1 0 0 0 1 1h24a1 1 0 0 0 1-1V12" fill="none" stroke="#b5bac0" stroke-width="1.500"/><path d="M20 9.500l8-8M22 1.500h6v6" fill="none" stroke="#d5d8db" stroke-width="1.500"/></svg><div style="left:2367px;top:1079.5px;width:1.5px;height:37px;background:#191d22;"></div><div style="left:2376.5px;top:1088px;width:168px;height:9px;background:#171b1f;border-radius:3px;"></div><div style="left:2376.5px;top:1098.5px;width:168px;height:9px;background:#171b1f;border-radius:3px;"></div><div style="left:0px;top:1118px;width:122px;height:65px;background:#22262e;"></div><div style="left:122px;top:1118px;width:2438px;height:65px;background:#22262e;"></div><div style="left:122px;top:1118px;width:2438px;height:18.5px;background:linear-gradient(#14181b,#0e1114 45%,#12161a 80%,#1a1e23);"></div><div style="left:121.5px;top:1118px;width:1.5px;height:65px;background:#171b20;"></div><div style="left:0px;top:1182.5px;width:122px;height:2px;background:#171b20;"></div><div style="left:12px;top:1124.5px;width:9px;height:47px;background:linear-gradient(#14181b 75%,#343b43 85%);border-radius:4.500px;"></div><div style="left:11.8px;top:1156.7px;width:9.4px;height:9.4px;background:#dfe2e8;border-radius:50%;"></div><svg style="left:36px;top:1130px" width="18" height="40" viewBox="0 0 18 40"><path d="M8.800 2.500l4 6h-2.600v3.200H7.400V8.500H4.800z" fill="#8d939a"/><path d="M8.800 36.500l4-6h-2.600v-3.200H7.400v3.200H4.800z" fill="#8d939a"/><circle cx="7.700" cy="18.500" r="3.600" fill="none" stroke="#a4a9af" stroke-width="1.400"/><path d="M10.400 21.200l4.600 4.600" stroke="#a4a9af" stroke-width="1.700"/></svg><div style="left:67.5px;top:1122px;width:50.5px;height:26.5px;background:#22262e;border:1.500px solid #15181c;border-radius:7px;"></div><div style="left:67.5px;top:1152.5px;width:50.5px;height:26.5px;background:#22262e;border:1.500px solid #15181c;border-radius:7px;"></div><svg style="left:85px;top:1127px" width="16" height="16" viewBox="0 0 16 16"><path d="M8 .500v15M.500 8h15" stroke="#eef0f2" stroke-width="2.800"/></svg><svg style="left:84px;top:1159px" width="18" height="12" viewBox="0 0 18 12"><path d="M2 2.500l7 6.500 7-6.500" fill="none" stroke="#eef0f2" stroke-width="2.800"/></svg><svg style="left:0;top:1118px" width="2560" height="65" viewBox="0 0 2560 65"><rect x="129.3" y="19" width="1.700" height="16.500" fill="#435057"/><rect x="141.7" y="19" width="1.700" height="16.500" fill="#435057"/><rect x="154.1" y="19" width="1.700" height="22.500" fill="#435057"/><rect x="166.5" y="19" width="1.700" height="16.500" fill="#435057"/><rect x="178.9" y="19" width="1.700" height="16.500" fill="#435057"/><rect x="191.3" y="19" width="1.700" height="16.500" fill="#435057"/><rect x="203.7" y="19" width="1.700" height="16.500" fill="#435057"/><rect x="216.1" y="19" width="1.700" height="22.500" fill="#435057"/><rect x="228.5" y="19" width="1.700" height="16.500" fill="#435057"/><rect x="240.9" y="19" width="1.700" height="16.500" fill="#435057"/><rect x="253.3" y="19" width="1.700" height="16.500" fill="#435057"/><rect x="265.7" y="19" width="1.700" height="16.500" fill="#435057"/><rect x="278.1" y="19" width="1.700" height="22.500" fill="#435057"/><rect x="290.5" y="19" width="1.700" height="16.500" fill="#435057"/><rect x="302.9" y="19" width="1.700" height="16.500" fill="#435057"/><rect x="315.3" y="19" width="1.700" height="16.500" fill="#435057"/><rect x="327.7" y="19" width="1.700" height="16.500" fill="#435057"/><rect x="340.1" y="19" width="1.700" height="22.500" fill="#435057"/><rect x="352.5" y="19" width="1.700" height="16.500" fill="#435057"/><rect x="364.9" y="19" width="1.700" height="16.500" fill="#435057"/><rect x="377.3" y="19" width="1.700" height="16.500" fill="#435057"/><rect x="389.7" y="19" width="1.700" height="16.500" fill="#435057"/><rect x="401.5" y="17.500" width="3" height="24.500" fill="#505d64"/><rect x="414.5" y="19" width="1.700" height="16.500" fill="#435057"/><rect x="426.9" y="19" width="1.700" height="16.500" fill="#435057"/><rect x="439.3" y="19" width="1.700" height="16.500" fill="#435057"/><rect x="451.7" y="19" width="1.700" height="16.500" fill="#435057"/><rect x="464.1" y="19" width="1.700" height="22.500" fill="#435057"/><rect x="476.5" y="19" width="1.700" height="16.500" fill="#435057"/><rect x="488.9" y="19" width="1.700" height="16.500" fill="#435057"/><rect x="501.3" y="19" width="1.700" height="16.500" fill="#435057"/><rect x="513.7" y="19" width="1.700" height="16.500" fill="#435057"/><rect x="526.1" y="19" width="1.700" height="22.500" fill="#435057"/><rect x="538.5" y="19" width="1.700" height="16.500" fill="#435057"/><rect x="550.9" y="19" width="1.700" height="16.500" fill="#435057"/><rect x="563.3" y="19" width="1.700" height="16.500" fill="#435057"/><rect x="575.7" y="19" width="1.700" height="16.500" fill="#435057"/><rect x="588.1" y="19" width="1.700" height="22.500" fill="#435057"/><rect x="600.5" y="19" width="1.700" height="16.500" fill="#435057"/><rect x="612.9" y="19" width="1.700" height="16.500" fill="#435057"/><rect x="625.3" y="19" width="1.700" height="16.500" fill="#435057"/><rect x="637.7" y="19" width="1.700" height="16.500" fill="#435057"/><rect x="650.1" y="19" width="1.700" height="22.500" fill="#435057"/><rect x="662.5" y="19" width="1.700" height="16.500" fill="#435057"/><rect x="674.9" y="19" width="1.700" height="16.500" fill="#435057"/><rect x="687.3" y="19" width="1.700" height="16.500" fill="#435057"/><rect x="699.7" y="19" width="1.700" height="16.500" fill="#435057"/><rect x="712.1" y="19" width="1.700" height="22.500" fill="#435057"/><rect x="724.5" y="19" width="1.700" height="16.500" fill="#435057"/><rect x="736.9" y="19" width="1.700" height="16.500" fill="#435057"/><rect x="749.3" y="19" width="1.700" height="16.500" fill="#435057"/><rect x="761.7" y="19" width="1.700" height="16.500" fill="#435057"/><rect x="773.5" y="17.500" width="3" height="24.500" fill="#505d64"/><rect x="786.5" y="19" width="1.700" height="16.500" fill="#435057"/><rect x="798.9" y="19" width="1.700" height="16.500" fill="#435057"/><rect x="811.3" y="19" width="1.700" height="16.500" fill="#435057"/><rect x="823.7" y="19" width="1.700" height="16.500" fill="#435057"/><rect x="836.1" y="19" width="1.700" height="22.500" fill="#435057"/><rect x="848.5" y="19" width="1.700" height="16.500" fill="#435057"/><rect x="860.9" y="19" width="1.700" height="16.500" fill="#435057"/><rect x="873.3" y="19" width="1.700" height="16.500" fill="#435057"/><rect x="885.7" y="19" width="1.700" height="16.500" fill="#435057"/><rect x="898.1" y="19" width="1.700" height="22.500" fill="#435057"/><rect x="910.5" y="19" width="1.700" height="16.500" fill="#435057"/><rect x="922.9" y="19" width="1.700" height="16.500" fill="#435057"/><rect x="935.3" y="19" width="1.700" height="16.500" fill="#435057"/><rect x="947.7" y="19" width="1.700" height="16.500" fill="#435057"/><rect x="960.1" y="19" width="1.700" height="22.500" fill="#435057"/><rect x="972.5" y="19" width="1.700" height="16.500" fill="#435057"/><rect x="984.9" y="19" width="1.700" height="16.500" fill="#435057"/><rect x="997.3" y="19" width="1.700" height="16.500" fill="#435057"/><rect x="1009.7" y="19" width="1.700" height="16.500" fill="#435057"/><rect x="1022.1" y="19" width="1.700" height="22.500" fill="#435057"/><rect x="1034.5" y="19" width="1.700" height="16.500" fill="#435057"/><rect x="1046.9" y="19" width="1.700" height="16.500" fill="#435057"/><rect x="1059.3" y="19" width="1.700" height="16.500" fill="#435057"/><rect x="1071.7" y="19" width="1.700" height="16.500" fill="#435057"/><rect x="1084.1" y="19" width="1.700" height="22.500" fill="#435057"/><rect x="1096.5" y="19" width="1.700" height="16.500" fill="#435057"/><rect x="1108.9" y="19" width="1.700" height="16.500" fill="#435057"/><rect x="1121.3" y="19" width="1.700" height="16.500" fill="#435057"/><rect x="1133.7" y="19" width="1.700" height="16.500" fill="#435057"/><rect x="1145.5" y="17.500" width="3" height="24.500" fill="#505d64"/><rect x="1158.5" y="19" width="1.700" height="16.500" fill="#435057"/><rect x="1170.9" y="19" width="1.700" height="16.500" fill="#435057"/><rect x="1183.3" y="19" width="1.700" height="16.500" fill="#435057"/><rect x="1195.7" y="19" width="1.700" height="16.500" fill="#435057"/><rect x="1208.1" y="19" width="1.700" height="22.500" fill="#435057"/><rect x="1220.5" y="19" width="1.700" height="16.500" fill="#435057"/><rect x="1232.9" y="19" width="1.700" height="16.500" fill="#435057"/><rect x="1245.3" y="19" width="1.700" height="16.500" fill="#435057"/><rect x="1257.7" y="19" width="1.700" height="16.500" fill="#435057"/><rect x="1270.1" y="19" width="1.700" height="22.500" fill="#435057"/><rect x="1282.5" y="19" width="1.700" height="16.500" fill="#435057"/><rect x="1294.9" y="19" width="1.700" height="16.500" fill="#435057"/><rect x="1307.3" y="19" width="1.700" height="16.500" fill="#435057"/><rect x="1319.7" y="19" width="1.700" height="16.500" fill="#435057"/><rect x="1332.1" y="19" width="1.700" height="22.500" fill="#435057"/><rect x="1344.5" y="19" width="1.700" height="16.500" fill="#435057"/><rect x="1356.9" y="19" width="1.700" height="16.500" fill="#435057"/><rect x="1369.3" y="19" width="1.700" height="16.500" fill="#435057"/><rect x="1381.7" y="19" width="1.700" height="16.500" fill="#435057"/><rect x="1394.1" y="19" width="1.700" height="22.500" fill="#435057"/><rect x="1406.5" y="19" width="1.700" height="16.500" fill="#435057"/><rect x="1418.9" y="19" width="1.700" height="16.500" fill="#435057"/><rect x="1431.3" y="19" width="1.700" height="16.500" fill="#435057"/><rect x="1443.7" y="19" width="1.700" height="16.500" fill="#435057"/><rect x="1456.1" y="19" width="1.700" height="22.500" fill="#435057"/><rect x="1468.5" y="19" width="1.700" height="16.500" fill="#435057"/><rect x="1480.9" y="19" width="1.700" height="16.500" fill="#435057"/><rect x="1493.3" y="19" width="1.700" height="16.500" fill="#435057"/><rect x="1505.7" y="19" width="1.700" height="16.500" fill="#435057"/><rect x="1517.5" y="17.500" width="3" height="24.500" fill="#505d64"/><rect x="1530.5" y="19" width="1.700" height="16.500" fill="#435057"/><rect x="1542.9" y="19" width="1.700" height="16.500" fill="#435057"/><rect x="1555.3" y="19" width="1.700" height="16.500" fill="#435057"/><rect x="1567.7" y="19" width="1.700" height="16.500" fill="#435057"/><rect x="1580.1" y="19" width="1.700" height="22.500" fill="#435057"/><rect x="1592.5" y="19" width="1.700" height="16.500" fill="#435057"/><rect x="1604.9" y="19" width="1.700" height="16.500" fill="#435057"/><rect x="1617.3" y="19" width="1.700" height="16.500" fill="#435057"/><rect x="1629.7" y="19" width="1.700" height="16.500" fill="#435057"/><rect x="1642.1" y="19" width="1.700" height="22.500" fill="#435057"/><rect x="1654.5" y="19" width="1.700" height="16.500" fill="#435057"/><rect x="1666.9" y="19" width="1.700" height="16.500" fill="#435057"/><rect x="1679.3" y="19" width="1.700" height="16.500" fill="#435057"/><rect x="1691.7" y="19" width="1.700" height="16.500" fill="#435057"/><rect x="1704.1" y="19" width="1.700" height="22.500" fill="#435057"/><rect x="1716.5" y="19" width="1.700" height="16.500" fill="#435057"/><rect x="1728.9" y="19" width="1.700" height="16.500" fill="#435057"/><rect x="1741.3" y="19" width="1.700" height="16.500" fill="#435057"/><rect x="1753.7" y="19" width="1.700" height="16.500" fill="#435057"/><rect x="1766.1" y="19" width="1.700" height="22.500" fill="#435057"/><rect x="1778.5" y="19" width="1.700" height="16.500" fill="#435057"/><rect x="1790.9" y="19" width="1.700" height="16.500" fill="#435057"/><rect x="1803.3" y="19" width="1.700" height="16.500" fill="#435057"/><rect x="1815.7" y="19" width="1.700" height="16.500" fill="#435057"/><rect x="1828.1" y="19" width="1.700" height="22.500" fill="#435057"/><rect x="1840.5" y="19" width="1.700" height="16.500" fill="#435057"/><rect x="1852.9" y="19" width="1.700" height="16.500" fill="#435057"/><rect x="1865.3" y="19" width="1.700" height="16.500" fill="#435057"/><rect x="1877.7" y="19" width="1.700" height="16.500" fill="#435057"/><rect x="1889.5" y="17.500" width="3" height="24.500" fill="#505d64"/><rect x="1902.5" y="19" width="1.700" height="16.500" fill="#435057"/><rect x="1914.9" y="19" width="1.700" height="16.500" fill="#435057"/><rect x="1927.3" y="19" width="1.700" height="16.500" fill="#435057"/><rect x="1939.7" y="19" width="1.700" height="16.500" fill="#435057"/><rect x="1952.1" y="19" width="1.700" height="22.500" fill="#435057"/><rect x="1964.5" y="19" width="1.700" height="16.500" fill="#435057"/><rect x="1976.9" y="19" width="1.700" height="16.500" fill="#435057"/><rect x="1989.3" y="19" width="1.700" height="16.500" fill="#435057"/><rect x="2001.7" y="19" width="1.700" height="16.500" fill="#435057"/><rect x="2014.1" y="19" width="1.700" height="22.500" fill="#435057"/><rect x="2026.5" y="19" width="1.700" height="16.500" fill="#435057"/><rect x="2038.9" y="19" width="1.700" height="16.500" fill="#435057"/><rect x="2051.3" y="19" width="1.700" height="16.500" fill="#435057"/><rect x="2063.7" y="19" width="1.700" height="16.500" fill="#435057"/><rect x="2076.1" y="19" width="1.700" height="22.500" fill="#435057"/><rect x="2088.5" y="19" width="1.700" height="16.500" fill="#435057"/><rect x="2100.9" y="19" width="1.700" height="16.500" fill="#435057"/><rect x="2113.3" y="19" width="1.700" height="16.500" fill="#435057"/><rect x="2125.7" y="19" width="1.700" height="16.500" fill="#435057"/><rect x="2138.1" y="19" width="1.700" height="22.500" fill="#435057"/><rect x="2150.5" y="19" width="1.700" height="16.500" fill="#435057"/><rect x="2162.9" y="19" width="1.700" height="16.500" fill="#435057"/><rect x="2175.3" y="19" width="1.700" height="16.500" fill="#435057"/><rect x="2187.7" y="19" width="1.700" height="16.500" fill="#435057"/><rect x="2200.1" y="19" width="1.700" height="22.500" fill="#435057"/><rect x="2212.5" y="19" width="1.700" height="16.500" fill="#435057"/><rect x="2224.9" y="19" width="1.700" height="16.500" fill="#435057"/><rect x="2237.3" y="19" width="1.700" height="16.500" fill="#435057"/><rect x="2249.7" y="19" width="1.700" height="16.500" fill="#435057"/><rect x="2261.5" y="17.500" width="3" height="24.500" fill="#505d64"/><rect x="2274.5" y="19" width="1.700" height="16.500" fill="#435057"/><rect x="2286.9" y="19" width="1.700" height="16.500" fill="#435057"/><rect x="2299.3" y="19" width="1.700" height="16.500" fill="#435057"/><rect x="2311.7" y="19" width="1.700" height="16.500" fill="#435057"/><rect x="2324.1" y="19" width="1.700" height="22.500" fill="#435057"/><rect x="2336.5" y="19" width="1.700" height="16.500" fill="#435057"/><rect x="2348.9" y="19" width="1.700" height="16.500" fill="#435057"/><rect x="2361.3" y="19" width="1.700" height="16.500" fill="#435057"/><rect x="2373.7" y="19" width="1.700" height="16.500" fill="#435057"/><rect x="2386.1" y="19" width="1.700" height="22.500" fill="#435057"/><rect x="2398.5" y="19" width="1.700" height="16.500" fill="#435057"/><rect x="2410.9" y="19" width="1.700" height="16.500" fill="#435057"/><rect x="2423.3" y="19" width="1.700" height="16.500" fill="#435057"/><rect x="2435.7" y="19" width="1.700" height="16.500" fill="#435057"/><rect x="2448.1" y="19" width="1.700" height="22.500" fill="#435057"/><rect x="2460.5" y="19" width="1.700" height="16.500" fill="#435057"/><rect x="2472.9" y="19" width="1.700" height="16.500" fill="#435057"/><rect x="2485.3" y="19" width="1.700" height="16.500" fill="#435057"/><rect x="2497.7" y="19" width="1.700" height="16.500" fill="#435057"/><rect x="2510.1" y="19" width="1.700" height="22.500" fill="#435057"/><rect x="2522.5" y="19" width="1.700" height="16.500" fill="#435057"/><rect x="2534.9" y="19" width="1.700" height="16.500" fill="#435057"/><rect x="2547.3" y="19" width="1.700" height="16.500" fill="#435057"/><rect x="2559.7" y="19" width="1.700" height="16.500" fill="#435057"/></svg><div style="left:406.6px;top:1158.7px;font-size:16.3px;line-height:23px;color:#e2e4e6;font-weight:400;white-space:nowrap;letter-spacing:.4px;-webkit-text-stroke:.3px #e2e4e6;">0:00:30;00</div><div style="left:778.6px;top:1158.7px;font-size:16.3px;line-height:23px;color:#e2e4e6;font-weight:400;white-space:nowrap;letter-spacing:.4px;-webkit-text-stroke:.3px #e2e4e6;">0:01:00;00</div><div style="left:1150.6px;top:1158.7px;font-size:16.3px;line-height:23px;color:#e2e4e6;font-weight:400;white-space:nowrap;letter-spacing:.4px;-webkit-text-stroke:.3px #e2e4e6;">0:01:30;00</div><div style="left:1522.6px;top:1158.7px;font-size:16.3px;line-height:23px;color:#e2e4e6;font-weight:400;white-space:nowrap;letter-spacing:.4px;-webkit-text-stroke:.3px #e2e4e6;">0:02:00;00</div><div style="left:1894.6px;top:1158.7px;font-size:16.3px;line-height:23px;color:#e2e4e6;font-weight:400;white-space:nowrap;letter-spacing:.4px;-webkit-text-stroke:.3px #e2e4e6;">0:02:30;00</div><div style="left:2266.6px;top:1158.7px;font-size:16.3px;line-height:23px;color:#e2e4e6;font-weight:400;white-space:nowrap;letter-spacing:.4px;-webkit-text-stroke:.3px #e2e4e6;">0:03:00;00</div><div style="left:122px;top:1183px;width:2438px;height:365px;background:#161a1e;"></div><div style="left:0px;top:1184.5px;width:121.5px;height:157px;background:#2a2f37;"></div><div style="left:0px;top:1342px;width:120.5px;height:73px;background:#343c45;border-top:2px solid #23282f;"></div><div style="left:122px;top:1341.5px;width:2438px;height:1.2px;background:#23282e;"></div><div style="left:15.5px;top:1367.2px;font-size:18px;line-height:25px;color:#e9ebed;font-weight:700;white-space:nowrap;">轨道 3</div><svg style="left:86px;top:1352px" width="22" height="12" viewBox="0 0 22 12"><path d="M.800 6C4 1.300 7.500.500 11 .500S18 1.300 21.200 6C18 10.700 14.500 11.500 11 11.500S4 10.700.800 6z" fill="#14181b"/><ellipse cx="11" cy="6" rx="4.300" ry="3.700" fill="#343c45"/><circle cx="11" cy="6" r="2.300" fill="#14181b"/></svg><svg style="left:89px;top:1386px" width="16" height="21" viewBox="0 0 16 21"><path d="M3.300 9V5.700a4 4 0 0 1 7.600-1.500" fill="none" stroke="#14181b" stroke-width="1.800"/><rect x=".800" y="9" width="13.500" height="11" rx="1" fill="#14181b"/><circle cx="7.500" cy="13" r="1.700" fill="#343c45"/><path d="M6.300 18.500l1.200-5 1.200 5z" fill="#343c45"/></svg><div style="left:0px;top:1415px;width:120.5px;height:73px;background:#343c45;border-top:2px solid #23282f;"></div><div style="left:122px;top:1414.5px;width:2438px;height:1.2px;background:#23282e;"></div><div style="left:15.5px;top:1440.2px;font-size:18px;line-height:25px;color:#e9ebed;font-weight:700;white-space:nowrap;">轨道 2</div><svg style="left:86px;top:1425px" width="22" height="12" viewBox="0 0 22 12"><path d="M.800 6C4 1.300 7.500.500 11 .500S18 1.300 21.200 6C18 10.700 14.500 11.500 11 11.500S4 10.700.800 6z" fill="#14181b"/><ellipse cx="11" cy="6" rx="4.300" ry="3.700" fill="#343c45"/><circle cx="11" cy="6" r="2.300" fill="#14181b"/></svg><svg style="left:89px;top:1459px" width="16" height="21" viewBox="0 0 16 21"><path d="M3.300 9V5.700a4 4 0 0 1 7.600-1.500" fill="none" stroke="#14181b" stroke-width="1.800"/><rect x=".800" y="9" width="13.500" height="11" rx="1" fill="#14181b"/><circle cx="7.500" cy="13" r="1.700" fill="#343c45"/><path d="M6.300 18.500l1.200-5 1.200 5z" fill="#343c45"/></svg><div style="left:0px;top:1488px;width:120.5px;height:60px;background:#343c45;border-top:2px solid #23282f;"></div><div style="left:122px;top:1487.5px;width:2438px;height:1.2px;background:#23282e;"></div><div style="left:15.5px;top:1506.7px;font-size:18px;line-height:25px;color:#e9ebed;font-weight:700;white-space:nowrap;">轨道 1</div><svg style="left:86px;top:1498px" width="22" height="12" viewBox="0 0 22 12"><path d="M.800 6C4 1.300 7.500.500 11 .500S18 1.300 21.200 6C18 10.700 14.500 11.500 11 11.500S4 10.700.800 6z" fill="#14181b"/><ellipse cx="11" cy="6" rx="4.300" ry="3.700" fill="#343c45"/><circle cx="11" cy="6" r="2.300" fill="#14181b"/></svg><svg style="left:89px;top:1520px" width="16" height="21" viewBox="0 0 16 21"><path d="M3.300 9V5.700a4 4 0 0 1 7.600-1.500" fill="none" stroke="#14181b" stroke-width="1.800"/><rect x=".800" y="9" width="13.500" height="11" rx="1" fill="#14181b"/><circle cx="7.500" cy="13" r="1.700" fill="#343c45"/><path d="M6.300 18.500l1.200-5 1.200 5z" fill="#343c45"/></svg><div style="left:120.5px;top:1184.5px;width:1.5px;height:364px;background:#1d2126;"></div><div style="left:122px;top:1344px;width:12.699999999999989px;height:66.59999999999991px;background:#363d46;border:1.500px solid #4e5a64;border-left:none;border-radius:0 8px 8px 0;overflow:hidden;"><div style="left:-2px;top:57.5px;width:16px;height:10px;background:#6b7178;"></div><div style="left:-7px;top:24px;font-size:8.500px;line-height:12px;color:#e6e8ea;white-space:nowrap;">预览</div></div><div style="left:1845px;top:1344px;width:67px;height:66.5px;background:#363d46;border:1.500px solid #4e5a64;border-radius:8px;overflow:hidden;"><svg style="left:0;top:0" width="67" height="67" viewBox="0 0 67 67"><path d="M0 57.900h14.500c3.500 0 4.500-2.500 6.500-5.200 3-4 7.300-6.200 12.800-6.200s9.800 2.200 12.800 6.200c2 2.700 3 5.200 6.500 5.200H67v10H0z" fill="#2b3037"/><path d="M0 59.400h15c3.500 0 4.800-2.600 6.800-5.200 2.800-3.800 6.800-5.900 12-5.900s9.200 2.100 12 5.900c2 2.600 3.300 5.200 6.800 5.200H67v8H0z" fill="#636669"/><path d="M34.800 51.700l6.900 11.500H27.900z" fill="#e9e9e9"/></svg><div style="left:8.500px;top:17.200px;font-size:12.200px;line-height:18px;color:#eef0f2;white-space:nowrap;">试用<span style="margin-left:3.800px">！</span></div></div><div style="left:1913px;top:1344px;width:107.5px;height:66.5px;background:#363d46;border:1.500px solid #4e5a64;border-radius:8px;overflow:hidden;"><svg style="left:0;top:0" width="108" height="67" viewBox="0 0 108 67"><path d="M0 24.500l13 6.500L0 40.500zM18.500 16.500l0 30 21-13.500-10-5z" fill="#2b8a80"/><circle cx="12.500" cy="33.500" r="7.300" fill="#d6d8dd"/><circle cx="18.500" cy="33" r="4.300" fill="#eceef0"/><circle cx="44.500" cy="33.500" r="7.300" fill="#d6d8dd"/><path d="M12 20.500h32.500v-4.300c0-1.500 1.300-2 2.400-1.100L57 23.300c1 .8 1 2 0 2.800L46.900 34.200c-1.100.9-2.400.4-2.400-1.100V29H12a4.250 4.250 0 0 1 0-8.500z" fill="#b5e235"/><rect x="94.200" y=".800" width="12.800" height="64.400" rx="6.400" fill="#2d8781" stroke="#20b3a4" stroke-width="1.300"/><path d="M97.500 29v8M100 29v8M102.300 29v8M104.500 29v8" stroke="#fff" stroke-width="1.200"/></svg></div><div style="left:122px;top:1417.4px;width:2192px;height:66.59999999999991px;background:#363d46;border:1.500px solid #4e5a64;border-left:none;border-radius:0 8px 8px 0;overflow:hidden;"><svg style="left:-122px;top:0" width="2320" height="67" viewBox="0 0 2320 67"><path d="M121.6 65.3V52.0H124.2V54.8H125.5V59.6H128.1V60.5H129.4V58.0H130.7V52.5H133.3V53.8H133.6V65.3ZM139.5 65.3V38.0H140.8V45.1H142.1V51.9H144.7V42.0H146.0V45.4H147.3V51.7H149.9V53.2H151.2V38.4H153.8V43.4H156.4V49.5H159.0V42.6H161.6V46.0H164.2V36.6H165.5V45.7H168.1V50.5H169.4V54.2H172.0V53.2H173.3V50.3H174.6V53.3H175.9V48.1H177.2V52.4H179.8V51.0H182.4V49.5H185.0V47.9H187.6V49.7H190.2V54.3H191.5V53.5H192.8V53.5H193.0V65.3ZM195.3 65.3V39.0H196.6V48.1H197.9V52.5H200.5V53.8H201.8V46.1H203.1V49.1H204.4V50.1H205.7V50.1H207.0V50.4H208.3V45.7H209.6V46.4H210.9V50.9H212.2V54.9H213.5V48.9H216.1V52.3H217.4V52.8H218.7V55.1H220.0V53.5H221.3V53.5H222.6V40.6H223.9V52.5H225.2V53.4H227.8V52.3H229.4V65.3ZM234.3 65.3V41.7H236.9V41.4H239.5V45.7H242.1V52.0H243.4V48.7H244.7V50.5H247.3V46.9H248.6V50.5H251.2V46.1H252.5V47.9H255.1V53.7H257.7V49.2H259.0V54.7H261.6V39.8H264.2V54.9H266.8V49.6H267.7V65.3ZM273.2 65.3V35.7H274.5V50.3H275.8V35.6H277.1V40.4H279.7V42.6H282.3V41.6H284.9V42.5H286.2V45.6H287.5V43.9H288.8V47.9H291.4V44.4H294.0V38.3H296.6V50.4H299.2V50.6H300.5V55.9H303.1V50.8H305.7V37.5H307.0V51.5H308.3V46.9H310.9V54.1H312.2V65.3ZM315.8 65.3V37.8H318.4V45.2H321.0V47.2H322.3V42.4H323.6V48.2H326.2V47.6H327.5V44.5H330.1V51.1H331.4V37.0H332.7V39.5H335.3V53.5H336.6V48.9H337.9V49.7H339.2V49.3H340.5V50.9H341.8V36.7H343.1V52.3H344.4V53.2H347.0V51.7H347.3V65.3ZM371.6 65.3V39.1H374.2V41.2H375.5V39.0H376.8V40.2H379.4V37.4H382.0V41.3H383.3V52.4H385.9V41.2H387.2V51.6H389.8V54.3H391.1V45.5H393.7V48.7H396.3V46.2H397.6V41.2H398.9V56.3H400.2V49.1H402.8V51.0H404.1V49.4H405.4V51.1H406.7V45.0H408.0V65.3ZM416.4 65.3V36.5H417.7V47.5H419.0V40.6H421.6V46.7H424.2V43.6H425.5V42.2H428.1V49.8H429.4V42.8H432.0V43.1H433.3V46.6H434.6V43.9H435.9V38.0H437.2V51.7H438.5V51.5H439.8V48.9H442.4V46.0H445.0V54.0H446.3V52.5H447.6V45.5H450.2V49.1H452.8V53.8H455.4V50.3H456.7V35.3H459.3V51.3H461.9V53.1H464.5V48.0H467.1V53.1H469.7V45.2H471.0V55.9H471.6V65.3ZM477.8 65.3V38.8H480.4V42.4H483.0V47.7H485.6V44.7H486.9V48.7H488.2V51.8H490.8V47.1H493.4V56.7H496.0V48.4H498.6V48.4H499.2V65.3ZM504.7 65.3V36.3H506.0V42.9H507.3V39.4H509.9V51.7H512.5V51.0H513.8V54.1H516.4V54.4H519.0V45.4H520.3V54.3H522.9V48.8H525.5V48.5H526.8V37.0H528.1V48.3H528.1V65.3ZM530.7 65.3V38.9H533.3V51.7H535.9V38.4H538.5V43.9H541.1V49.3H543.7V52.9H545.0V44.4H547.6V52.6H550.2V48.6H551.5V56.0H554.1V39.2H555.4V55.0H556.7V54.9H559.3V51.6H561.9V57.1H564.5V55.6H565.8V50.1H568.0V65.3ZM633.0 65.3V36.4H635.6V40.9H636.9V40.4H639.5V40.3H640.8V49.3H642.1V48.1H644.7V38.2H647.3V37.0H648.6V42.7H649.9V49.0H652.5V43.3H655.1V48.1H656.4V54.2H659.0V39.8H660.3V37.1H662.9V54.9H664.2V49.5H666.8V46.1H669.4V54.4H670.7V38.9H673.3V50.2H675.9V50.0H677.2V52.7H678.5V52.8H679.8V54.3H682.4V46.3H683.7V54.6H685.0V51.8H686.3V38.7H687.6V55.7H688.2V65.3ZM690.8 65.3V36.1H692.1V37.5H694.7V43.2H696.0V40.2H698.6V46.2H699.9V49.5H701.2V51.9H702.5V47.1H705.1V47.4H707.7V52.7H710.3V51.3H712.9V48.9H714.2V48.9H716.8V47.9H718.1V49.3H720.7V53.6H722.0V52.4H724.6V48.8H725.9V53.7H728.5V36.1H731.1V53.3H732.4V54.6H732.7V65.3ZM846.3 65.3V39.3H847.6V44.5H848.9V46.0H850.2V43.0H851.5V43.9H854.1V38.1H855.4V47.2H856.7V48.4H858.0V46.1H860.6V48.4H863.2V49.5H865.8V50.6H867.1V48.7H869.7V51.3H871.0V37.3H873.6V45.8H874.9V53.0H876.2V39.3H878.8V45.8H880.1V45.2H881.4V48.7H884.0V50.0H885.3V49.4H887.9V52.7H889.2V51.0H890.5V52.0H891.8V54.4H893.1V54.7H894.4V56.2H895.7V47.5H898.3V54.7H899.6V55.5H900.9V47.5H903.5V48.8H904.8V54.8H906.1V53.3H906.4V65.3ZM931.8 65.3V37.2H933.1V44.1H935.7V50.5H938.3V51.6H939.6V42.2H940.9V36.7H943.5V44.6H946.1V35.9H947.4V50.0H950.0V53.9H951.3V43.6H952.6V35.7H953.9V51.5H955.2V51.9H956.5V50.0H959.1V51.7H961.7V53.0H964.3V54.3H966.9V47.8H968.2V51.9H970.8V55.7H973.0V65.3ZM976.3 65.3V40.9H978.9V53.4H981.5V52.5H984.1V51.7H986.7V50.3H988.0V53.7H989.3V51.7H991.9V46.6H994.5V39.9H997.1V48.9H999.7V52.6H1001.0V53.5H1003.6V52.1H1004.9V65.3ZM1008.0 65.3V42.9H1010.6V44.9H1011.9V53.8H1014.5V50.4H1017.1V53.2H1019.7V50.4H1022.3V49.9H1023.6V56.6H1026.2V50.7H1027.3V65.3ZM1090.6 65.3V41.0H1091.9V49.2H1094.5V52.8H1095.8V43.5H1098.4V52.8H1101.0V55.1H1102.3V53.9H1103.6V48.8H1106.2V50.1H1108.8V49.7H1111.4V50.9H1114.0V56.3H1115.0V65.3ZM1117.5 65.3V39.0H1118.8V47.1H1120.1V35.6H1122.7V42.5H1124.0V44.6H1126.6V54.8H1129.2V36.7H1131.8V46.6H1132.8V65.3ZM1137.7 65.3V37.1H1140.3V51.6H1142.9V50.1H1145.5V43.9H1148.1V50.5H1150.7V42.3H1153.3V43.7H1154.6V50.5H1155.9V45.8H1157.2V48.0H1158.5V39.6H1161.1V39.6H1163.7V48.4H1166.3V52.8H1168.9V35.3H1170.2V50.4H1171.5V52.4H1174.1V55.7H1175.4V45.1H1177.0V65.3ZM1191.2 65.3V36.2H1192.5V48.3H1193.8V41.2H1196.4V43.3H1197.7V49.7H1199.0V50.2H1200.3V50.1H1202.9V54.7H1204.2V46.7H1205.5V46.1H1208.1V54.2H1210.7V53.7H1212.0V56.4H1212.3V65.3ZM1215.0 65.3V38.8H1216.3V48.3H1217.6V47.7H1220.2V49.5H1221.5V44.6H1224.1V50.8H1226.7V42.0H1229.3V47.6H1230.6V48.1H1231.9V57.1H1233.2V52.7H1235.8V53.3H1236.7V65.3ZM1240.3 65.3V39.5H1242.9V52.7H1245.5V47.1H1246.8V47.5H1249.4V52.6H1250.7V53.6H1253.3V54.1H1255.9V50.3H1258.5V40.9H1259.8V55.3H1262.4V52.2H1263.7V49.8H1266.3V48.0H1268.9V54.2H1270.2V39.5H1272.8V40.5H1275.4V50.8H1276.6V65.3ZM1279.2 65.3V37.0H1280.5V39.9H1281.8V47.7H1283.1V39.1H1284.4V40.0H1287.0V38.0H1288.3V52.0H1289.6V50.4H1292.2V43.6H1294.8V36.5H1297.4V48.3H1298.7V50.6H1300.0V49.1H1301.3V39.2H1303.9V50.4H1305.2V55.5H1306.5V49.2H1309.1V49.3H1310.4V55.7H1313.0V40.3H1315.6V49.8H1317.2V65.3ZM1331.2 65.3V38.0H1333.8V46.2H1336.4V51.1H1339.0V50.1H1341.6V47.1H1342.9V37.9H1344.2V44.3H1345.5V47.5H1348.1V46.6H1349.4V48.3H1350.7V48.1H1352.0V52.5H1354.6V54.0H1355.9V52.9H1358.5V36.1H1360.4V65.3ZM1365.0 65.3V40.8H1367.6V53.1H1370.2V45.8H1371.5V50.8H1372.8V54.0H1374.1V44.3H1375.4V50.9H1378.0V51.0H1380.6V42.8H1383.2V50.6H1385.8V52.7H1387.1V51.4H1388.4V51.0H1390.3V65.3ZM1422.0 65.3V44.2H1423.3V48.8H1425.9V52.5H1427.2V51.9H1429.8V55.8H1432.4V50.7H1435.0V51.5H1437.6V57.2H1438.9V44.5H1440.2V46.6H1442.8V43.6H1445.4V54.1H1446.7V53.4H1449.3V56.9H1450.6V56.1H1451.9V56.5H1453.2V58.8H1454.5V54.5H1456.2V65.3ZM1469.8 65.3V38.8H1472.4V45.4H1475.0V39.9H1477.6V50.7H1478.9V36.6H1481.5V40.9H1482.8V49.3H1485.4V50.0H1488.0V37.4H1490.6V37.9H1493.2V44.6H1494.5V52.6H1497.1V50.8H1499.7V47.9H1502.3V46.1H1503.6V49.3H1506.2V48.5H1508.8V47.5H1510.1V51.2H1511.4V48.1H1512.7V52.6H1514.0V35.5H1514.6V65.3ZM1516.9 65.3V36.4H1519.5V50.2H1522.1V48.5H1523.4V41.7H1526.0V50.8H1527.3V53.5H1529.9V41.2H1531.2V51.0H1533.8V38.7H1536.4V48.3H1537.7V39.2H1540.3V53.7H1541.6V49.4H1544.2V38.2H1546.8V37.2H1547.7V65.3ZM1560.7 65.3V40.9H1562.0V44.3H1564.6V52.2H1565.9V52.2H1568.5V55.8H1571.1V49.9H1572.4V55.4H1573.0V65.3ZM1592.2 65.3V35.7H1594.8V42.9H1596.1V45.2H1597.4V53.0H1598.7V46.5H1600.0V50.4H1601.3V48.8H1603.9V47.6H1605.2V50.4H1606.5V51.9H1609.1V44.7H1610.4V49.4H1613.0V54.1H1614.3V50.4H1615.6V53.6H1616.9V51.3H1618.2V56.1H1619.5V54.9H1622.1V53.5H1623.4V54.9H1624.7V49.7H1625.0V65.3ZM1647.7 65.3V38.0H1650.3V46.3H1652.9V49.3H1655.5V51.6H1658.1V52.4H1660.7V51.3H1662.0V54.2H1663.3V53.2H1664.6V49.1H1667.2V51.6H1668.5V53.4H1669.8V48.7H1672.4V48.8H1673.7V53.1H1676.3V50.7H1677.6V47.1H1678.6V65.3ZM1682.8 65.3V40.2H1684.1V48.3H1685.4V48.3H1686.7V43.8H1688.0V40.0H1689.3V45.1H1691.9V39.3H1694.5V54.1H1695.8V54.7H1697.1V40.0H1699.7V49.8H1701.0V47.1H1703.6V38.4H1706.2V54.3H1708.8V49.4H1710.1V57.3H1711.4V49.7H1714.0V53.4H1716.6V51.1H1717.9V49.2H1717.9V65.3ZM1721.0 65.3V37.7H1722.3V47.7H1723.6V48.5H1724.9V44.7H1726.2V47.0H1728.8V47.9H1731.4V37.7H1734.0V43.4H1735.3V48.8H1736.6V51.4H1737.9V53.4H1740.5V36.6H1741.8V51.4H1744.4V47.2H1747.0V36.3H1749.6V51.0H1750.9V48.0H1752.2V49.0H1752.6V65.3ZM1758.0 65.3V38.2H1760.6V39.9H1761.9V47.9H1764.5V37.2H1765.8V42.7H1768.4V50.6H1771.0V39.7H1772.3V48.8H1774.9V54.3H1776.2V47.4H1777.5V55.9H1778.8V53.2H1780.1V54.6H1782.7V54.9H1785.3V39.4H1786.6V39.6H1787.3V65.3ZM1790.0 65.3V37.9H1792.6V43.3H1795.2V40.3H1796.5V41.6H1799.1V52.4H1801.7V47.9H1804.3V48.9H1805.6V48.8H1808.2V50.6H1810.8V53.0H1812.1V35.6H1814.7V48.3H1816.0V50.1H1818.6V53.4H1821.2V53.9H1823.4V65.3ZM1829.2 65.3V36.5H1831.8V49.4H1833.1V52.5H1834.4V42.8H1835.7V47.9H1838.3V43.1H1840.9V54.0H1842.2V47.9H1844.8V54.5H1847.4V47.7H1848.7V51.4H1850.0V48.3H1851.3V37.0H1851.6V65.3ZM1853.9 65.3V36.6H1855.2V50.4H1856.5V39.8H1857.8V41.6H1860.4V41.9H1861.7V49.2H1863.0V35.5H1864.3V50.3H1866.9V51.4H1869.5V48.3H1870.8V46.0H1872.1V45.4H1873.4V45.3H1876.0V47.9H1878.6V49.1H1879.9V55.6H1882.5V54.9H1885.1V52.6H1887.7V48.6H1890.3V54.4H1892.9V37.2H1893.8V65.3ZM1902.6 65.3V40.9H1903.9V48.9H1905.2V46.0H1907.8V47.9H1909.1V42.2H1910.4V52.4H1913.0V52.6H1915.6V45.9H1918.2V54.2H1919.5V50.0H1920.8V46.2H1923.4V49.6H1924.7V52.5H1926.0V52.5H1927.3V47.6H1929.9V39.2H1931.2V51.8H1932.5V49.0H1933.8V38.6H1935.1V53.0H1937.7V50.9H1940.3V53.5H1942.9V47.9H1943.5V65.3ZM1948.4 65.3V36.5H1949.7V48.3H1951.0V40.7H1953.6V50.7H1954.9V50.5H1957.5V39.5H1960.1V40.5H1962.7V49.5H1965.3V49.7H1967.9V50.8H1970.5V42.6H1973.1V43.7H1974.4V47.1H1977.0V53.1H1979.6V48.9H1980.9V52.2H1982.2V49.6H1983.5V52.7H1986.1V47.1H1988.7V46.4H1991.3V55.5H1992.6V53.1H1995.2V50.8H1996.5V48.6H1997.8V52.5H1999.1V54.6H2000.4V49.2H2003.0V55.5H2004.3V46.7H2005.8V65.3ZM2015.6 65.3V35.9H2016.9V40.3H2018.2V41.7H2019.5V40.0H2020.8V43.7H2023.4V43.4H2024.7V37.7H2026.0V49.6H2028.6V52.2H2029.9V43.3H2031.2V52.8H2033.8V53.9H2036.4V38.6H2037.7V36.3H2040.3V52.1H2042.9V51.2H2045.5V46.5H2046.8V46.6H2049.4V38.3H2052.0V55.2H2053.3V50.1H2054.6V50.3H2055.9V49.5H2058.5V55.6H2061.1V49.8H2063.7V54.5H2066.3V49.5H2068.5V65.3ZM2074.0 65.3V38.5H2076.6V45.1H2077.9V43.1H2079.2V44.0H2081.8V36.1H2083.1V46.9H2085.7V53.2H2087.0V40.2H2089.6V47.0H2092.2V56.0H2093.5V46.3H2094.8V40.6H2095.8V65.3ZM2099.0 65.3V39.6H2101.6V41.0H2102.9V40.4H2104.2V48.5H2105.5V41.3H2106.8V37.8H2108.1V37.4H2109.4V53.3H2110.7V43.7H2112.0V52.0H2113.3V39.1H2115.9V52.7H2117.2V48.1H2119.8V54.8H2122.4V50.9H2123.7V48.7H2125.0V49.3H2127.6V47.8H2130.2V48.8H2132.8V48.6H2134.1V56.6H2135.4V57.0H2136.7V50.8H2138.0V51.9H2139.0V65.3ZM2148.0 65.3V36.5H2150.6V41.1H2151.9V51.1H2153.2V36.2H2154.5V41.8H2155.8V45.2H2158.4V52.7H2161.0V36.8H2163.6V44.0H2166.2V53.0H2168.8V35.4H2170.1V36.9H2171.4V39.1H2174.0V47.2H2175.3V45.2H2177.9V37.1H2179.2V50.9H2181.8V50.7H2183.1V47.4H2184.4V50.9H2187.0V53.3H2189.6V52.2H2191.0V65.3ZM2194.2 65.3V39.9H2195.5V43.1H2196.8V42.9H2199.4V52.2H2202.0V53.0H2203.3V52.2H2204.6V46.8H2205.9V55.1H2208.5V50.6H2209.8V47.9H2211.1V51.2H2212.4V53.7H2213.7V43.8H2216.3V57.3H2217.6V55.2H2218.9V50.1H2220.8V65.3ZM2225.0 65.3V38.5H2227.6V39.6H2228.9V44.4H2230.2V40.9H2232.8V49.7H2235.4V49.2H2236.7V52.1H2239.3V54.8H2241.9V52.3H2244.5V51.0H2246.0V65.3ZM2249.4 65.3V37.4H2250.7V44.0H2253.3V51.0H2255.9V45.8H2257.2V52.0H2259.8V43.3H2261.1V48.4H2263.7V55.2H2266.3V45.9H2267.6V54.7H2270.2V53.1H2272.8V50.3H2275.4V53.6H2278.0V65.3ZM2284.0 65.3V36.7H2286.6V37.3H2287.9V38.7H2290.5V50.4H2293.1V52.5H2294.8V65.3Z" fill="#808080"/></svg><div style="left:0px;top:8px;width:4px;height:52px;background:#222531;"></div><div style="left:20px;top:16.300px;font-size:23px;line-height:32px;color:#f4f5f6;white-space:nowrap;text-shadow:1px 1.500px 1px #000,0 0 2px rgba(0,0,0,.6);">gsp-video</div></div><div style="left:122px;top:1490px;width:19.5px;height:54.799999999999955px;background:#363d46;border:1.500px solid #4e5a64;border-left:none;border-radius:0 8px 8px 0;overflow:hidden;"></div><div style="left:143px;top:1490px;width:1012.5px;height:54.799999999999955px;background:#363d46;border:1.500px solid #4e5a64;border-radius:8px;overflow:hidden;"><div style="left:23px;top:11.200px;font-size:23px;line-height:32px;color:#f4f5f6;white-space:nowrap;text-shadow:1px 1.500px 1px #000,0 0 2px rgba(0,0,0,.6);">firefly</div></div><div style="left:1157px;top:1490px;width:1157px;height:54.799999999999955px;background:#363d46;border:1.500px solid #4e5a64;border-radius:8px;overflow:hidden;"><div style="left:23px;top:11.200px;font-size:23px;line-height:32px;color:#f4f5f6;white-space:nowrap;text-shadow:1px 1.500px 1px #000,0 0 2px rgba(0,0,0,.6);">firefly</div></div><div style="left:2281px;top:1117.5px;width:14.5px;height:19px;background:#78a830;border:1px solid #62cc3c;"></div><div style="left:2335px;top:1117.5px;width:14.5px;height:19px;background:#a51f25;border:1px solid #cc3038;"></div><svg style="left:2281px;top:1117px" width="70" height="20" viewBox="0 0 70 20"><path d="M4.500 5.500v8M7 5.500v8M9.500 5.500v8" stroke="#9fdc55" stroke-width="1"/><path d="M58.500 5.500v8M61 5.500v8M63.500 5.500v8" stroke="#e3535a" stroke-width="1"/></svg><svg style="left:2294px;top:1117px" width="43" height="35" viewBox="0 0 43 35"><path d="M1 .500h40.500v17.500L21.200 33 1 18z" fill="#4f8389" stroke="#86b5b9" stroke-width="1"/></svg><div style="left:2314.2px;top:1149px;width:2.2px;height:399.5px;background:#dadada;box-shadow:0 0 1px #000;"></div><div style="left:2359.8px;top:1115.7px;font-size:16.3px;line-height:23px;color:#e2e4e6;font-weight:400;white-space:nowrap;letter-spacing:.4px;-webkit-text-stroke:.3px #e2e4e6;">0:03:04;09</div><div style="left:0px;top:1548px;width:2560px;height:17px;background:#111417;"></div><div style="left:0px;top:1548px;width:121.5px;height:17px;background:#2a2f37;"></div><div style="left:213.5px;top:1551px;width:2344px;height:11.2px;background:#9aa2ac;border-radius:5.600px;"></div></div></body></html>
